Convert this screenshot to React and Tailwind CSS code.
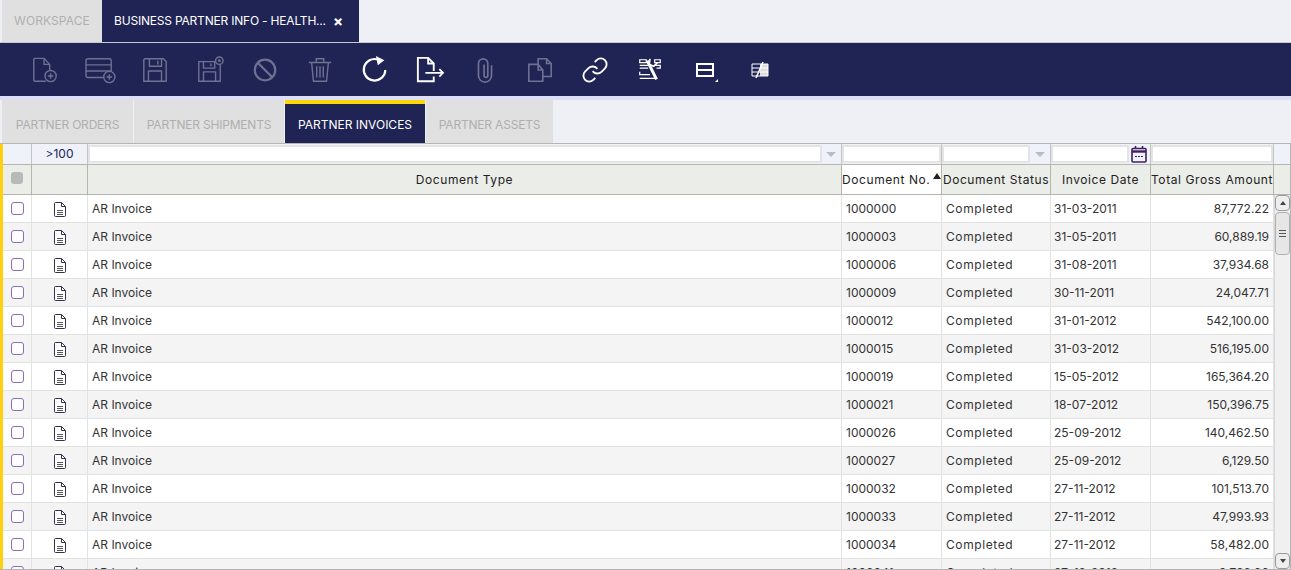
import React from "react";

const rows = [
  ["1000000", "31-03-2011", "87,772.22"],
  ["1000003", "31-05-2011", "60,889.19"],
  ["1000006", "31-08-2011", "37,934.68"],
  ["1000009", "30-11-2011", "24,047.71"],
  ["1000012", "31-01-2012", "542,100.00"],
  ["1000015", "31-03-2012", "516,195.00"],
  ["1000019", "15-05-2012", "165,364.20"],
  ["1000021", "18-07-2012", "150,396.75"],
  ["1000026", "25-09-2012", "140,462.50"],
  ["1000027", "25-09-2012", "6,129.50"],
  ["1000032", "27-11-2012", "101,513.70"],
  ["1000033", "27-11-2012", "47,993.93"],
  ["1000034", "27-11-2012", "58,482.00"],
  ["1000041", "27-12-2012", "9,768.00"],
];

// toolbar icons, all on a 30x30 box
const Plus = ({ cx, cy }) => (
  <>
    <circle cx={cx} cy={cy} r="6" fill="#202455" />
    <path d={`M${cx - 3} ${cy}h6M${cx} ${cy - 3}v6`} />
  </>
);

const toolIcons = [
  {
    off: true,
    d: (
      <>
        <path d="M3 3.500a1 1 0 0 1 1-1h10l6 6.500v10M16 27H4a1 1 0 0 1-1-1V3.500" />
        <path d="M14 2.500v6.500h6" />
        <Plus cx={21} cy={21.500} />
      </>
    ),
  },
  {
    off: true,
    d: (
      <>
        <rect x="0" y="3" width="27" height="20" rx="2" />
        <path d="M0 9.500h27M0 16h27" />
        <Plus cx={25} cy={22.500} />
      </>
    ),
  },
  {
    off: true,
    d: <path d="M4 3h20l3 3v21H3V4zM9 3v8h13V3M18 5v4M8 27V16h14v11" />,
  },
  {
    off: true,
    d: (
      <>
        <path d="M3 6h20l3 3v18H3zM8 6v7h12V6M16 8v3M8 27V17h13v10" />
        <circle cx="25" cy="5" r="4" fill="#202455" />
        <circle cx="25" cy="5" r="0.8" />
      </>
    ),
  },
  {
    off: true,
    d: (
      <>
        <circle cx="15" cy="15" r="11" strokeWidth="2.400" />
        <path d="M7.500 7.500l15 15" strokeWidth="2.400" />
      </>
    ),
  },
  {
    off: true,
    d: <path d="M3 7h24M11 7V3h8v4M6 7l2 20h14l2-20M11.500 11v12M15 11v12M18.500 11v12" />,
  },
  {
    d: (
      <>
        <path d="M26 15A11.500 11.500 0 1 1 18 3.800" strokeWidth="2.400" />
        <path d="M16 0l9 4.500-7 5.500z" fill="#fff" stroke="none" />
      </>
    ),
  },
  {
    d: (
      <>
        <path d="M19 16V8l-6-6H2v25h17v-5" strokeWidth="2" />
        <path d="M13 2v6h6" strokeWidth="2" />
        <path d="M10 18h19M25 14l4 4-4 4" strokeWidth="1.800" />
      </>
    ),
  },
  {
    off: true,
    d: <path d="M22 10v11a7 7 0 0 1-14 0V8a5 5 0 0 1 10 0v13a2 2 0 0 1-4 0V9" strokeWidth="1.800" />,
  },
  {
    off: true,
    d: <path d="M12 9H3v18h15V15l-5-6zM13 9v6h5M13 9V3h9l5 5v14h-9M22 3v5h5" strokeWidth="1.700" />,
  },
  {
    d: (
      <g transform="scale(1.25)" strokeWidth="1.600">
        <path d="M10 13a5 5 0 0 0 7.540.540l3-3a5 5 0 0 0-7.070-7.070l-1.720 1.710" />
        <path d="M14 11a5 5 0 0 0-7.540-.540l-3 3a5 5 0 0 0 7.070 7.070l1.710-1.710" />
      </g>
    ),
  },
  {
    d: (
      <>
        <path d="M4 4h7v3H4zM20 4h6v3h-6zM4 10h11M20 10h6v3h-4M4 13h9M4 17v3h11M4 24h17" strokeWidth="1.300" />
        <path d="M12 5l10 20" strokeWidth="3.200" />
        <path d="M15 3l-1 6 5 2 4-4" strokeWidth="1.800" />
      </>
    ),
  },
];

function ToolIcon({ d, off }) {
  return (
    <svg
      viewBox="0 0 30 30"
      className={
        off
          ? "w-[28px] h-[28px] shrink-0 overflow-visible text-[#6f7191]"
          : "w-[28px] h-[28px] shrink-0 overflow-visible text-white"
      }
      fill="none"
      stroke="currentColor"
      strokeWidth="1.500"
    >
      {d}
    </svg>
  );
}

function DocIcon() {
  return (
    <svg viewBox="0 0 12 15" className="w-3 h-[15px] mt-[1px]" fill="none" stroke="#33334f" strokeWidth="1">
      <path d="M1.500.500h6l4 4v9a1 1 0 0 1-1 1h-9a1 1 0 0 1-1-1v-12a1 1 0 0 1 1-1z" fill="#fff" />
      <path d="M7.500.500v4h4" />
      <path d="M3 8.500h6M3 10.500h6M3 12.500h6" stroke="#555" />
    </svg>
  );
}

function Caret() {
  return <div className="w-0 h-0 border-x-[5px] border-x-transparent border-t-[5px] border-t-[#b9bcc4]" />;
}

function ArrowBtn({ up }) {
  return (
    <div className="h-4 shrink-0 bg-[#eeeeee] border border-[#9a9a9a] rounded-sm flex items-center justify-center">
      <div
        className={
          up
            ? "w-0 h-0 border-x-[3px] border-x-transparent border-b-[4px] border-b-[#444]"
            : "w-0 h-0 border-x-[3px] border-x-transparent border-t-[4px] border-t-[#444]"
        }
      />
    </div>
  );
}

function TopTab({ label, active }) {
  return (
    <div
      className={
        active
          ? "w-[257px] h-full bg-[#202455] text-white flex items-center pl-3 text-[12px] whitespace-nowrap tracking-[-0.2px]"
          : "w-[100px] h-full bg-[#e0e0e0] text-[#b0b0b0] flex items-center pl-3 text-[12px] whitespace-nowrap tracking-[0.1px]"
      }
    >
      <span>{label}</span>
      {active && <span className="ml-auto mr-[16px] text-[15px] leading-none font-bold">×</span>}
    </div>
  );
}

function SubTab({ label, w, active }) {
  return (
    <div
      className={
        active
          ? "h-full bg-[#202455] text-white border-t-4 border-[#ffd60a] pt-[2px] flex items-center justify-center text-[12px] whitespace-nowrap"
          : "h-full bg-[#e0e0e0] text-[#afafaf] border-t-4 border-[#e0e0e0] pt-[2px] flex items-center justify-center text-[12px] whitespace-nowrap tracking-[-0.2px]"
      }
      style={{ width: w }}
    >
      {label}
    </div>
  );
}

const filterCell = "h-full shrink-0 border-r border-[#c4c4c4] flex items-center";
const headCell = "h-full shrink-0 border-r border-[#b5b5ad] flex items-center justify-center text-[12px] text-[#222] tracking-[0.58px] whitespace-nowrap";
const bodyCell = "h-full shrink-0 border-r border-[#e2e2e2] flex items-center text-[12px] text-[#333]";

export default function App() {
  return (
    <div className="w-[1291px] h-[570px] overflow-hidden bg-[#eff0f6] flex flex-col font-['Inter',sans-serif]">
      <div className="h-[42px] pl-[2px] flex shrink-0">
        <TopTab label="WORKSPACE" />
        <TopTab label="BUSINESS PARTNER INFO - HEALTH..." active />
      </div>
      <div className="h-[54px] shrink-0 bg-[#202455] border-t border-[#c9c9d2] flex items-center pl-[31px] gap-[27px]">
        {toolIcons.map((t, i) => (
          <ToolIcon key={i} d={t.d} off={t.off} />
        ))}
        <div className="w-[28px] h-[28px] shrink-0 flex items-center justify-center">
          <div className="relative w-[18px] h-[14px] border-2 border-white flex flex-col justify-center">
            <div className="h-[2px] bg-white" />
            <div className="absolute -right-[6px] -bottom-[7px] w-0 h-0 border-l-[3px] border-l-transparent border-b-[3px] border-b-white" />
          </div>
        </div>
        <div className="w-[28px] h-[28px] shrink-0 flex items-center justify-center">
          <svg viewBox="0 0 20 18" className="w-5 h-[18px]" fill="none" stroke="#fff" strokeWidth="1">
            <path d="M10 3h8v12h-8z" fill="#ddd" stroke="none" />
            <path d="M2 3h16v12H2zM2 7h16M2 11h16" />
            <path d="M13 1L6 17" strokeWidth="1.500" />
          </svg>
        </div>
      </div>
      <div className="h-1 shrink-0 bg-[#dcdff5]" />
      <div className="h-[43px] shrink-0 pl-[2px] flex gap-[1px]">
        <SubTab label="PARTNER ORDERS" w={131} />
        <SubTab label="PARTNER SHIPMENTS" w={150} />
        <SubTab label="PARTNER INVOICES" w={140} active />
        <SubTab label="PARTNER ASSETS" w={127} />
      </div>

      <div className="flex-1 min-h-0 flex border-t border-b border-r border-[#b5b5b5] overflow-hidden">
        <div className="w-[3px] shrink-0 bg-[#ffd00f]" />
        <div className="flex-1 min-w-0 flex flex-col">
          {/* filter row */}
          <div className="h-[21px] shrink-0 flex bg-[#eff2f9] border-b border-[#b5b5ad]">
            <div className={`${filterCell} w-[29px]`} />
            <div className={`${filterCell} w-[56px] justify-center text-[12px] text-[#202455]`}>&gt;100</div>
            <div className={`${filterCell} w-[754px]`}>
              <div className="w-[734px] h-[18px] bg-white border-2 border-[#e4e4e4]" />
              <div className="ml-[4px]"><Caret /></div>
            </div>
            <div className={`${filterCell} w-[100px]`}>
              <div className="w-[99px] h-[18px] bg-white border-2 border-[#e4e4e4]" />
            </div>
            <div className={`${filterCell} w-[109px]`}>
              <div className="w-[88px] h-[18px] bg-white border-2 border-[#e4e4e4]" />
              <div className="ml-[5px]"><Caret /></div>
            </div>
            <div className={`${filterCell} w-[100px]`}>
              <div className="w-[78px] h-[18px] bg-white border-2 border-[#e4e4e4]" />
              <svg viewBox="0 0 16 17" className="w-4 h-[17px] ml-[2px]" fill="none" stroke="#40205f" strokeWidth="1.600">
                <rect x="1" y="2.500" width="14" height="13.500" rx="1" />
                <path d="M1 5.500h14" strokeWidth="2.400" />
                <path d="M4.500 0v3M11.500 0v3" />
                <path d="M4 10.500h2M7 10.500h2M10 10.500h2" strokeWidth="1.200" />
              </svg>
            </div>
            <div className={`${filterCell} w-[123px]`}>
              <div className="w-[122px] h-[18px] bg-white border-2 border-[#e4e4e4]" />
            </div>
          </div>

          {/* header row */}
          <div className="h-[30px] shrink-0 flex bg-[#ebede8] border-b border-[#b5b5ad]">
            <div className={`${headCell} w-[29px]`}>
              <div className="w-3 h-3 rounded-[3px] bg-[#b9b9b9] -mt-[4px]" />
            </div>
            <div className={`${headCell} w-[56px]`} />
            <div className={`${headCell} w-[754px]`}>Document Type</div>
            <div className={`${headCell} w-[100px] bg-white relative justify-start`}>
              <span>Document No.</span>
              <div className="absolute right-[0px] top-[8px] w-0 h-0 border-x-[4px] border-x-transparent border-b-[6px] border-b-[#222]" />
            </div>
            <div className={`${headCell} w-[109px]`}>Document Status</div>
            <div className={`${headCell} w-[100px]`}>Invoice Date</div>
            <div className={`${headCell} w-[123px]`}>Total Gross Amount</div>
          </div>

          <div className="flex-1 min-h-0 flex">
            <div className="w-[1271px] shrink-0 overflow-hidden">
              {rows.map((r, i) => (
                <div
                  key={r[0]}
                  className={
                    i % 2 === 0
                      ? "h-[28px] flex bg-white border-b border-[#e2e2e2]"
                      : "h-[28px] flex bg-[#f4f4f4] border-b border-[#e2e2e2]"
                  }
                >
                  <div className={`${bodyCell} w-[29px] justify-center`}>
                    <div className="w-[13px] h-[13px] rounded-[3px] border border-[#8e6bb5] bg-white" />
                  </div>
                  <div className={`${bodyCell} w-[56px] justify-center`}>
                    <DocIcon />
                  </div>
                  <div className={`${bodyCell} w-[754px] pl-[4px]`}>AR Invoice</div>
                  <div className={`${bodyCell} w-[100px] pl-1`}>{r[0]}</div>
                  <div className={`${bodyCell} w-[109px] pl-1 tracking-[0.6px]`}>Completed</div>
                  <div className={`${bodyCell} w-[100px] pl-[3px]`}>{r[1]}</div>
                  <div className={`${bodyCell} w-[123px] justify-end pr-[4px]`}>{r[2]}</div>
                </div>
              ))}
            </div>
            {/* scrollbar */}
            <div className="w-[16px] shrink-0 bg-[#f0f0f0] border-l border-[#d8d8d8] flex flex-col">
              <ArrowBtn up />
              <div className="flex-1 min-h-0 pt-[1px]">
                <div className="h-[43px] bg-[#e6e6e6] border border-[#b0b0b0] rounded-sm flex flex-col items-center justify-center gap-[2px]">
                  <div className="w-[7px] h-[1px] bg-[#555]" />
                  <div className="w-[7px] h-[1px] bg-[#555]" />
                  <div className="w-[7px] h-[1px] bg-[#555]" />
                </div>
              </div>
              <ArrowBtn />
            </div>
          </div>
        </div>
      </div>
    </div>
  );
}
